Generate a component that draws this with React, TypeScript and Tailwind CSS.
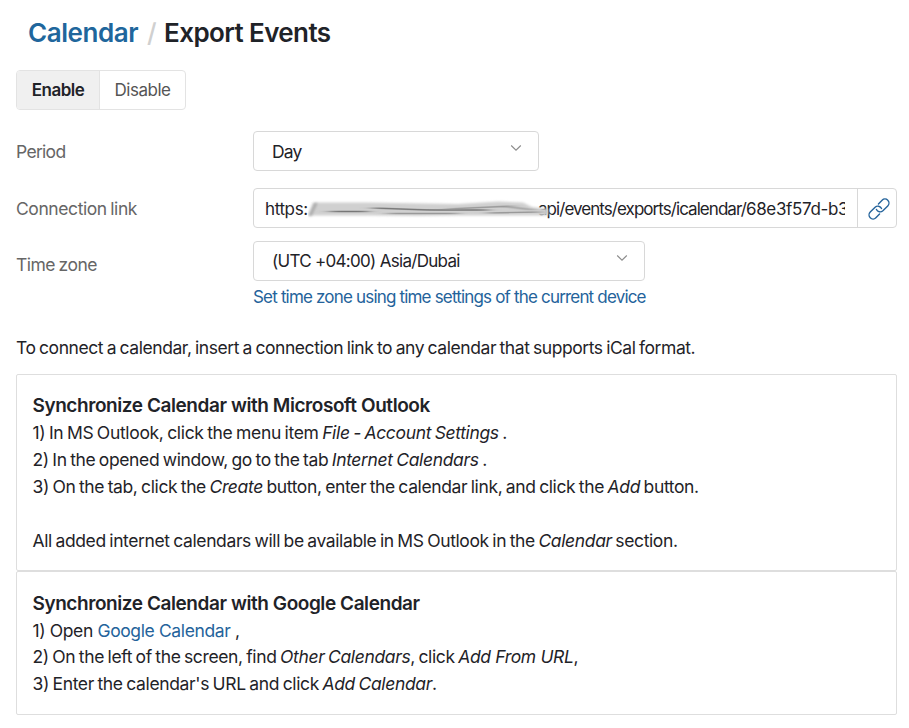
import React from "react";

type ChevronProps = { className?: string };

function Chevron({ className = "" }: ChevronProps) {
  return (
    <svg className={className} width="12" height="8" viewBox="0 0 12 8" fill="none" stroke="#8c8c8c" strokeWidth="1.1">
      <path d="M1.2 1.5 6 6.2l4.8-4.7" />
    </svg>
  );
}

function LinkIcon() {
  return (
    <svg width="22" height="22" viewBox="-11 -11 22 22" fill="none" stroke="#24639b" strokeWidth="1.4" strokeLinecap="round">
      <g transform="rotate(-45)">
        <path d="M-3.2 4H-8.400a4 4 0 0 1 0-8H-1.500a4 4 0 0 1 3.600 5.500" />
        <path d="M3.200-4H8.400a4 4 0 0 1 0 8H1.500a4 4 0 0 1-3.600-5.500" />
      </g>
    </svg>
  );
}

function Redaction() {
  return (
    <svg className="absolute left-[54px] top-[9px] h-[22px] w-[244px]" viewBox="0 0 244 22" preserveAspectRatio="none">
      <defs>
        <filter id="smudge" x="-10" y="-6" width="264" height="34" filterUnits="userSpaceOnUse">
          <feGaussianBlur stdDeviation="1.8 0.8" />
        </filter>
        <filter id="streak" x="-10" y="-6" width="264" height="34" filterUnits="userSpaceOnUse">
          <feGaussianBlur stdDeviation="6 0.7" />
        </filter>
      </defs>
      <path d="M5 4.500H60L150 6 190 3.500 215 4.500 224 9 240 11V17.500H150L110 18 60 17.500H0z" fill="#d0d0d0" filter="url(#smudge)" />
      <g filter="url(#streak)" fill="none" stroke="#777" strokeWidth="1.3">
        <path d="M22 13.500H60M65 10 120 12H180" />
        <path d="M80 15.500H150M140 11 205 8M180 15 232 14M195 8 225 12" stroke="#999" />
      </g>
      <path d="M2 18 8 5" stroke="#999" strokeWidth="2" filter="url(#smudge)" />
    </svg>
  );
}

export default function App() {
  return (
    <main className="h-[728px] w-[909px] overflow-hidden bg-white px-4 pt-4 font-['Inter',sans-serif] text-[17.5px] leading-[27px] tracking-[-0.38px] text-[#1f2328] [word-spacing:-1px] [&_em]:tracking-[-0.35px]">
      <h1 className="flex h-[34px] items-center pl-3 text-[26px] font-semibold leading-[34px] [word-spacing:0px]">
        <a className="tracking-[-0.45px] text-[#20669c]">Calendar</a>
        <span className="ml-[9px] mr-2 font-medium tracking-[-0.6px] text-[#d0d0d0]">/</span>
        <span className="tracking-[-0.6px]">Export Events</span>
      </h1>

      <div className="mt-5 flex h-10 w-[170px] overflow-hidden rounded-[4px] border border-[#e3e3e3] text-[17px] tracking-[-0.5px]">
        <button className="w-[83px] border-r border-[#e3e3e3] bg-[#f0f0f0] font-semibold">Enable</button>
        <button className="flex-1 text-[#555]">Disable</button>
      </div>

      <div className="mt-[21px] flex h-10 items-center">
        <label className="w-[237px] shrink-0 tracking-[-0.7px] text-[#666]">Period</label>
        <div className="flex h-10 w-[286px] items-center justify-between rounded-[4px] border border-[#d8d8d8] pl-[18px] pr-4">
          <span className="tracking-[-0.8px]">Day</span>
          <Chevron className="mb-1.5" />
        </div>
      </div>

      <div className="mt-[17px] flex h-10 items-center">
        <label className="w-[237px] shrink-0 tracking-[-0.42px] text-[#666]">Connection link</label>
        <div className="relative flex h-10 w-[644px] shrink-0 rounded-[4px] border border-[#d8d8d8]">
          <div className="ml-[11px] flex w-[580px] items-center overflow-hidden whitespace-nowrap pt-0.5 text-[17px]">
            <span className="w-[273px] shrink-0">https:</span>
            <span className="tracking-[-0.95px]">
              api/events/exports/icalendar/<span className="tracking-[-0.35px]">68e3f57d-b3</span>
            </span>
          </div>
          <Redaction />
          <button className="ml-auto flex w-[39px] items-center justify-center border-l border-[#d8d8d8] pl-1 pt-px">
            <LinkIcon />
          </button>
        </div>
      </div>

      <div className="mt-[13px] flex">
        <label className="w-[237px] shrink-0 pt-2.5 tracking-[-0.5px] text-[#666]">Time zone</label>
        <div className="text-[17px] [word-spacing:0px]">
          <div className="flex h-10 w-[392px] items-center justify-between rounded-[4px] border border-[#d8d8d8] pl-[18px] pr-4">
            <span className="tracking-[-0.7px]">(UTC +04:00) Asia/Dubai</span>
            <Chevron className="mb-1.5" />
          </div>
          <a className="mt-[3px] block whitespace-nowrap tracking-[-0.82px] text-[#24639b]">Set time zone using time settings of the current device</a>
        </div>
      </div>

      <p className="mt-[23px] tracking-[-0.43px]">To connect a calendar, insert a connection link to any calendar that supports iCal format.</p>

      <section className="mt-[13px] h-[197px] w-[881px] rounded-[2px] border border-[#dedede] px-[15.500px] pt-[17px]">
        <h2 className="text-[19px] font-semibold tracking-[-0.43px] [word-spacing:0px]">Synchronize Calendar with Microsoft Outlook</h2>
        <p className="tracking-[-0.33px] [&_em]:tracking-[-0.18px]">1) In MS Outlook, click the menu item <em>File - Account Settings</em> .</p>
        <p>2) In the opened window, go to the tab <em>Internet Calendars</em> .</p>
        <p>3) On the tab, click the <em>Create</em> button, enter the calendar link, and click the <em>Add</em> button.</p>
        <p className="mt-[27px]">All added internet calendars will be available in MS Outlook in the <em>Calendar</em> section.</p>
      </section>
      <section className="h-[144px] w-[881px] rounded-[2px] border border-[#dedede] px-[15.500px] pt-[18px]">
        <h2 className="text-[19px] font-semibold tracking-[-0.43px] [word-spacing:0px]">Synchronize Calendar with Google Calendar</h2>
        <p className="[word-spacing:0px]">1) Open <a className="text-[#24639b]">Google Calendar</a> ,</p>
        <p className="-mt-px">2) On the left of the screen, find <em>Other Calendars</em>, click <em className="[word-spacing:0px]">Add From URL</em>,</p>
        <p className="tracking-[-0.36px]">3) Enter the calendar's URL and click <em>Add Calendar</em>.</p>
      </section>
    </main>
  );
}
